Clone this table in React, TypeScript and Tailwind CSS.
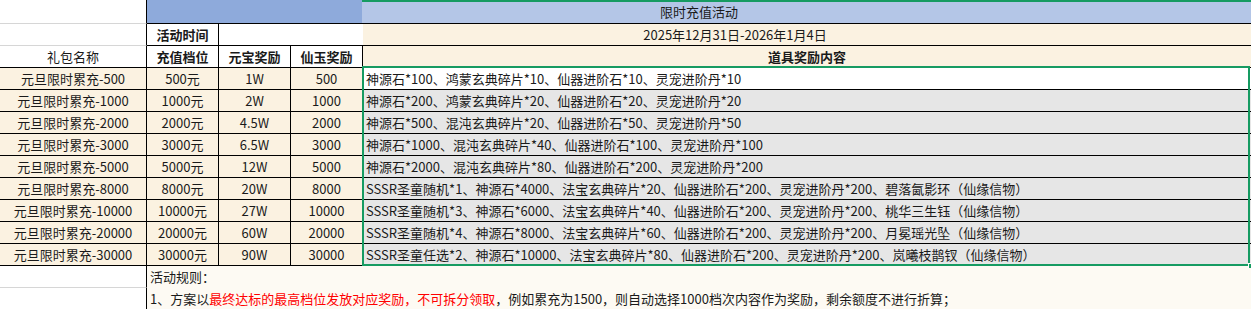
import React from 'react';

type Row = [string, string, string, string, string];

const rows: Row[] = [
  ['元旦限时累充-500', '500元', '1W', '500', '神源石*100、鸿蒙玄典碎片*10、仙器进阶石*10、灵宠进阶丹*10'],
  ['元旦限时累充-1000', '1000元', '2W', '1000', '神源石*200、鸿蒙玄典碎片*20、仙器进阶石*20、灵宠进阶丹*20'],
  ['元旦限时累充-2000', '2000元', '4.5W', '2000', '神源石*500、混沌玄典碎片*20、仙器进阶石*50、灵宠进阶丹*50'],
  ['元旦限时累充-3000', '3000元', '6.5W', '3000', '神源石*1000、混沌玄典碎片*40、仙器进阶石*100、灵宠进阶丹*100'],
  ['元旦限时累充-5000', '5000元', '12W', '5000', '神源石*2000、混沌玄典碎片*80、仙器进阶石*200、灵宠进阶丹*200'],
  ['元旦限时累充-8000', '8000元', '20W', '8000', 'SSSR圣童随机*1、神源石*4000、法宝玄典碎片*20、仙器进阶石*200、灵宠进阶丹*200、碧落氤影环（仙缘信物）'],
  ['元旦限时累充-10000', '10000元', '27W', '10000', 'SSSR圣童随机*3、神源石*6000、法宝玄典碎片*40、仙器进阶石*200、灵宠进阶丹*200、桃华三生钰（仙缘信物）'],
  ['元旦限时累充-20000', '20000元', '60W', '20000', 'SSSR圣童随机*4、神源石*8000、法宝玄典碎片*60、仙器进阶石*200、灵宠进阶丹*200、月冕瑶光坠（仙缘信物）'],
  ['元旦限时累充-30000', '30000元', '90W', '30000', 'SSSR圣童任选*2、神源石*10000、法宝玄典碎片*80、仙器进阶石*200、灵宠进阶丹*200、岚曦枝鹊钗（仙缘信物）'],
];

const cell = 'flex items-center justify-center border-r border-b border-black whitespace-nowrap overflow-hidden';

export default function App() {
  return (
    <div className="relative w-[1251px] h-[309px] overflow-hidden bg-white text-[13px] leading-[22px] text-[#1a1a1a] font-['Noto_Sans_CJK_SC','Microsoft_YaHei',sans-serif]">
      <div className="grid grid-cols-[147px_72px_72px_72px_888px] grid-rows-[24px_repeat(13,22px)]">
        {/* row 1 */}
        <div className="border-r border-black border-b border-b-[#d6d6d6] bg-white" />
        <div className="col-span-4 flex items-center justify-center border-b border-black bg-[linear-gradient(to_right,#8eaadb_215px,#b4c6e7_215px)]">
          限时充值活动
        </div>

        {/* row 2 */}
        <div className="border-r border-black border-b border-b-[#d6d6d6] bg-white" />
        <div className={`${cell} bg-white font-bold`}>活动时间</div>
        <div className="col-span-3 flex items-center justify-center border-b border-black bg-[linear-gradient(to_right,#ffffff_144px,#fbf2e1_144px)]">
          2025年12月31日-2026年1月4日
        </div>

        {/* row 3 */}
        <div className={`${cell} bg-white`}>礼包名称</div>
        <div className={`${cell} bg-white font-bold`}>充值档位</div>
        <div className={`${cell} bg-white font-bold`}>元宝奖励</div>
        <div className={`${cell} bg-white font-bold`}>仙玉奖励</div>
        <div className="flex items-center justify-center border-b border-black bg-[#fbf2e1] font-bold">道具奖励内容</div>

        {rows.map((r, i) => (
          <React.Fragment key={r[0]}>
            <div className={`${cell} bg-[#fbf2e1]`}>{r[0]}</div>
            <div className={`${cell} bg-[#fbf2e1]`}>{r[1]}</div>
            <div className={`${cell} bg-[#fbf2e1]`}>{r[2]}</div>
            <div className={`${cell} bg-[#fbf2e1]`}>{r[3]}</div>
            <div className={`flex items-center pl-[3px] border-b border-black whitespace-nowrap overflow-hidden ${i === 0 ? 'bg-white' : 'bg-[#e6e6e6]'}`}>
              {r[4]}
            </div>
          </React.Fragment>
        ))}

        {/* notes */}
        <div className="border-r border-black border-b border-b-[#d6d6d6] bg-white" />
        <div className="col-span-4 row-span-2 flex flex-col bg-[#fdfaf3] pl-[3px] whitespace-nowrap">
          <div className="h-[22px] flex items-center">活动规则：</div>
          <div className="h-[22px] flex items-center">
            1、方案以<span className="text-[#ff0000]">最终达标的最高档位发放对应奖励，不可拆分领取</span>，例如累充为1500，则自动选择1000档次内容作为奖励，剩余额度不进行折算；
          </div>
        </div>
        <div className="border-r border-black border-b border-b-[#d6d6d6] bg-white" />
      </div>

      {/* selection overlay */}
      <div className="absolute left-[362px] top-0 right-0 h-[2px] bg-[#169b62]" />
      <div className="absolute left-[362px] top-[66px] w-[888px] h-[200px] border-2 border-[#169b62]" />
      <div className="absolute left-[1248px] top-[263px] w-[4px] h-[5px] bg-[#169b62] border-l border-t border-white" />
    </div>
  );
}
